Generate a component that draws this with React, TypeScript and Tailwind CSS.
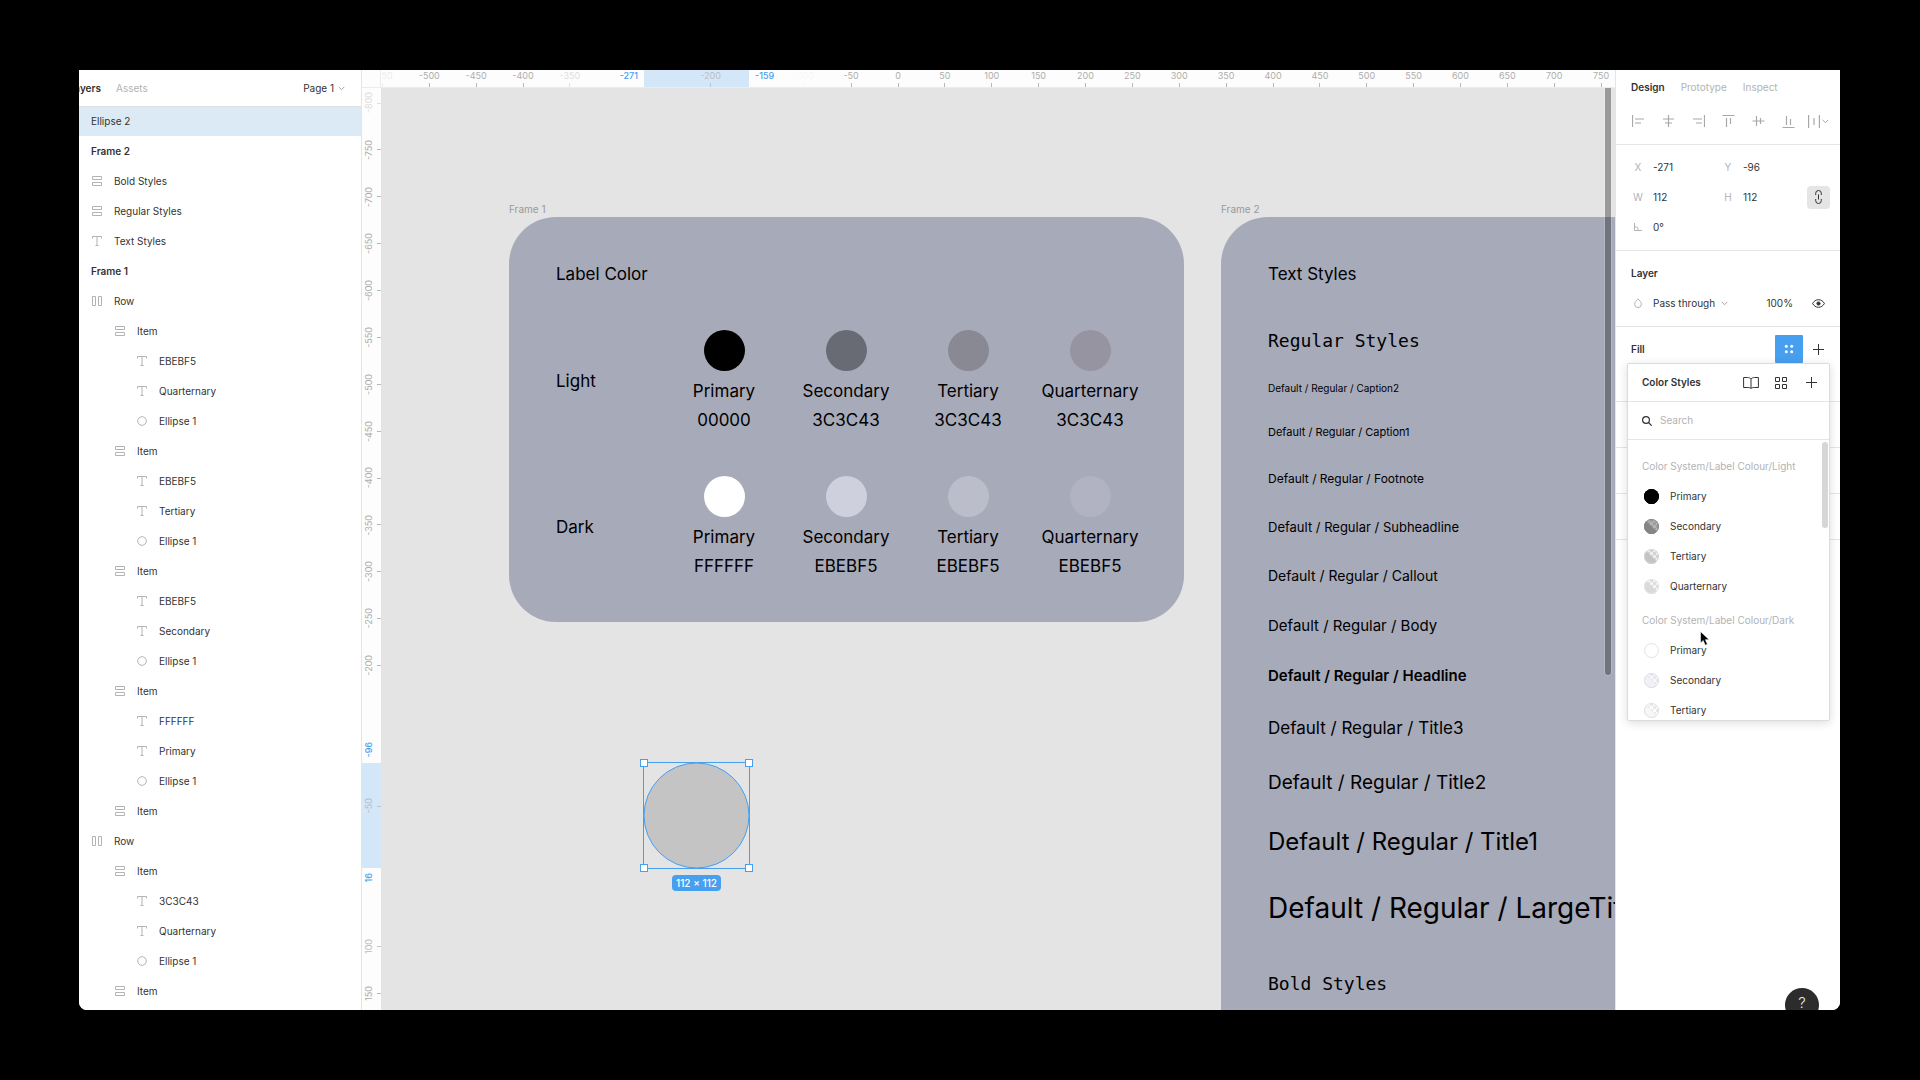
import React from 'react';

type LayerKind = 'text' | 'ellipse' | 'column' | 'row' | 'frame';

interface Layer {
  name: string;
  kind: LayerKind;
  depth: number;
  selected?: boolean;
}

const item = (labels: string[]): Layer[] => [
  { name: 'Item', kind: 'column', depth: 2 },
  ...labels.map((name): Layer => ({ name, kind: 'text', depth: 3 })),
  { name: 'Ellipse 1', kind: 'ellipse', depth: 3 },
];

const layers: Layer[] = [
  { name: 'Ellipse 2', kind: 'ellipse', depth: 0, selected: true },
  { name: 'Frame 2', kind: 'frame', depth: 0 },
  { name: 'Bold Styles', kind: 'column', depth: 1 },
  { name: 'Regular Styles', kind: 'column', depth: 1 },
  { name: 'Text Styles', kind: 'text', depth: 1 },
  { name: 'Frame 1', kind: 'frame', depth: 0 },
  { name: 'Row', kind: 'row', depth: 1 },
  ...item(['EBEBF5', 'Quarternary']),
  ...item(['EBEBF5', 'Tertiary']),
  ...item(['EBEBF5', 'Secondary']),
  ...item(['FFFFFF', 'Primary']),
  { name: 'Item', kind: 'column', depth: 2 },
  { name: 'Row', kind: 'row', depth: 1 },
  ...item(['3C3C43', 'Quarternary']),
  { name: 'Item', kind: 'column', depth: 2 },
];

const indent = ['pl-[5px]', 'pl-[28px]', 'pl-[51px]', 'pl-[73px]'];

// Canvas zoom: pixels per design unit, and where 0,0 falls in the canvas
const SCALE = 0.9375;
const ORIGIN_X = 517;
const ORIGIN_Y = 765;

interface Mark {
  at: number;
  tone?: string;
}

const faded = 'opacity-40';

const marksX: Mark[] = [
  { at: -550, tone: 'opacity-20' },
  { at: -500 },
  { at: -450 },
  { at: -400 },
  { at: -350, tone: faded },
  { at: -200, tone: 'opacity-70' },
  { at: -100, tone: 'opacity-10' },
  ...Array.from({ length: 17 }, (_, i) => ({ at: -50 + i * 50 })),
];

const marksY: Mark[] = [
  { at: -800, tone: faded },
  ...Array.from({ length: 12 }, (_, i) => ({ at: -750 + i * 50 })),
  { at: -50, tone: 'opacity-70' },
  { at: 100, tone: 'opacity-80' },
  { at: 150 },
];

const lightSwatches = [
  { name: 'Primary', hex: '00000', fill: 'bg-black' },
  { name: 'Secondary', hex: '3C3C43', fill: 'bg-[#686a74]' },
  { name: 'Tertiary', hex: '3C3C43', fill: 'bg-[#898994]' },
  { name: 'Quarternary', hex: '3C3C43', fill: 'bg-[#9794a2]' },
];

const darkSwatches = [
  { name: 'Primary', hex: 'FFFFFF', fill: 'bg-white' },
  { name: 'Secondary', hex: 'EBEBF5', fill: 'bg-[#cfd0dd]' },
  { name: 'Tertiary', hex: 'EBEBF5', fill: 'bg-[#bbbdcb]' },
  { name: 'Quarternary', hex: 'EBEBF5', fill: 'bg-[#b1b3c2]' },
];

const textStyles = [
  { name: 'Caption2', style: 'text-[10px] leading-[12px]' },
  { name: 'Caption1', style: 'text-[11px] leading-[16px]' },
  { name: 'Footnote', style: 'text-[12px] leading-[18px]' },
  { name: 'Subheadline', style: 'text-[13px] leading-[18px]' },
  { name: 'Callout', style: 'text-[14px] leading-[20px]' },
  { name: 'Body', style: 'text-[15px] leading-[20px]' },
  { name: 'Headline', style: 'text-[15px] leading-[20px] font-semibold' },
  { name: 'Title3', style: 'text-[17px] leading-[24px]' },
  { name: 'Title2', style: 'text-[19px] leading-[26px]' },
  { name: 'Title1', style: 'text-[24px] leading-[32px]' },
  { name: 'LargeTitle', style: 'text-[28px] leading-[40px]' },
];

const LayerIcon = ({ kind }: { kind: LayerKind }) => (
  <svg width="10" height="10" viewBox="0 0 10 10" fill="none" className="shrink-0" stroke={kind === 'frame' ? '#333' : '#b3b3b3'}>
    {kind === 'text' && <path d="M0.5 2.5V0.5H9.5V2.5M5 0.5V9.5M3.5 9.5H6.5" />}
    {kind === 'ellipse' && <circle cx="5" cy="5" r="4.3" />}
    {kind === 'column' && <path d="M0.5 0.5H9.5V3.5H0.5ZM0.5 6.5H9.5V9.5H0.5Z" />}
    {kind === 'row' && <path d="M0.5 0.5V9.5H3.5V0.5ZM6.5 0.5V9.5H9.5V0.5Z" />}
    {kind === 'frame' && <path d="M2.5 0V10M7.5 0V10M0 2.5H10M0 7.5H10" />}
  </svg>
);

const Chevron = ({ className = '' }: { className?: string }) => (
  <svg width="7" height="5" viewBox="0 0 7 5" fill="none" stroke="#a3a3a3" className={className}>
    <path d="M0.7 0.9L3.5 3.7L6.3 0.9" />
  </svg>
);

const PlusIcon = () => (
  <svg width="11" height="11" viewBox="0 0 11 11" stroke="#333" fill="none">
    <path d="M5.5 0V11M0 5.5H11" />
  </svg>
);

const LayersPanel = () => (
  <aside className="w-[283px] shrink-0 overflow-hidden border-r border-[#e5e5e5] bg-white">
    {/* The panel is scrolled slightly past its left edge */}
    <div className="-ml-[15px]">
      <div className="relative flex h-9 items-center pl-[3px] pr-4 shadow-[0_1px_0_#e0e0e0]">
        <button className="w-[34px] text-right font-semibold">Layers</button>
        <button className="ml-[15px] text-[#b3b3b3]">Assets</button>
        <button className="ml-auto flex items-center gap-1">
          Page 1
          <Chevron />
        </button>
      </div>
      <ul>
        {layers.map((layer, i) => (
          <li key={i}>
            <button
              className={`flex h-[30px] w-full items-center gap-3 text-left ${indent[layer.depth]} ${layer.selected ? 'bg-[#dceaf5]' : ''} ${layer.kind === 'frame' ? 'font-semibold' : ''}`}
            >
              <LayerIcon kind={layer.kind} />
              {layer.name}
            </button>
          </li>
        ))}
      </ul>
    </div>
  </aside>
);

const RulerX = () => (
  <div className="relative h-[18px] flex-1 overflow-hidden border-b border-[#ececec] bg-[#fdfdfd] text-[9px] leading-[12px] text-[#adadad]">
    <div className="absolute inset-y-0 left-[263px] w-[105px] bg-[#d3e7f8]" />
    {marksX.map(({ at, tone = '' }) => (
      <div key={at} className={`absolute inset-y-0 flex w-10 -translate-x-1/2 flex-col items-center justify-between ${tone}`} style={{ left: ORIGIN_X + at * SCALE }}>
        <span>{at}</span>
        <i className="h-1 w-px bg-[#b8b8b8]" />
      </div>
    ))}
    <span className="absolute left-[225px] top-0 w-8 text-right font-medium text-[#479ff0]">-271</span>
    <span className="absolute left-[374px] top-0 font-medium text-[#479ff0]">-159</span>
  </div>
);

const RulerY = () => (
  <div className="relative w-[19px] shrink-0 overflow-hidden bg-[#fdfdfd] text-[9px] leading-[10px] text-[#adadad]">
    <div className="absolute inset-x-0 top-[675px] h-[105px] bg-[#d3e7f8]" />
    {marksY.map(({ at, tone = '' }) => (
      <div key={at} className={`absolute inset-x-0 flex h-10 -translate-y-1/2 items-center justify-between pl-[2px] ${tone}`} style={{ top: ORIGIN_Y + at * SCALE }}>
        <span className="rotate-180 [writing-mode:vertical-rl]">{at}</span>
        <i className="h-px w-1 bg-[#b8b8b8]" />
      </div>
    ))}
    <span className="absolute left-[2px] top-[654px] rotate-180 font-medium text-[#479ff0] [writing-mode:vertical-rl]">-96</span>
    <span className="absolute left-[2px] top-[785px] rotate-180 font-medium text-[#479ff0] [writing-mode:vertical-rl]">16</span>
  </div>
);

const SwatchRow = ({ title, swatches }: { title: string; swatches: typeof lightSwatches }) => (
  <div className="flex items-center">
    <div className="w-[107px]">{title}</div>
    {swatches.map((swatch) => (
      <div key={swatch.name} className="flex w-[122px] flex-col items-center">
        <div className={`mb-[9px] size-[41px] rounded-full ${swatch.fill}`} />
        <div className="mb-[7px]">{swatch.name}</div>
        <div>{swatch.hex}</div>
      </div>
    ))}
  </div>
);

const Canvas = () => (
  <div className="relative flex-1 overflow-hidden bg-[#e4e4e4] text-black">
    {/* Frame 1 */}
    <div className="absolute left-[128px] top-[115px]">
      <div className="h-[14px] leading-[12px] text-[#999]">Frame 1</div>
      <div className="flex h-[405px] w-[675px] flex-col gap-[45px] rounded-[47px] bg-[#a7aab9] pl-[47px] pt-[46px] text-[17px] leading-[22px]">
        <div>Label Color</div>
        <SwatchRow title="Light" swatches={lightSwatches} />
        <SwatchRow title="Dark" swatches={darkSwatches} />
      </div>
    </div>

    {/* Frame 2 */}
    <div className="absolute left-[840px] top-[115px]">
      <div className="h-[14px] leading-[12px] text-[#999]">Frame 2</div>
      <div className="flex h-[1400px] w-[675px] flex-col gap-[45px] rounded-[47px] bg-[#a7aab9] pl-[47px] pt-[46px]">
        <div className="text-[17px] leading-[22px]">Text Styles</div>
        <div className="flex flex-col gap-[30px] whitespace-nowrap">
          <div className="font-['DejaVu_Sans_Mono',monospace] text-[18px] leading-[22px]">Regular Styles</div>
          {textStyles.map(({ name, style }) => (
            <div key={name} className={style}>{`Default / Regular / ${name}`}</div>
          ))}
        </div>
        <div className="font-['DejaVu_Sans_Mono',monospace] text-[18px] leading-[22px]">Bold Styles</div>
      </div>
    </div>

    {/* Selected ellipse */}
    <div className="absolute left-[263px] top-[675px] flex flex-col items-center">
      <svg width="105" height="105" viewBox="0 0 105 105" className="overflow-visible" stroke="#479ff0">
        <circle cx="52.5" cy="52.5" r="52.5" fill="#c4c4c4" />
        <rect x="-0.5" y="-0.5" width="106" height="106" fill="none" />
        <g fill="#fff">
          <rect x="-3.5" y="-3.5" width="7" height="7" />
          <rect x="101.5" y="-3.5" width="7" height="7" />
          <rect x="-3.5" y="101.5" width="7" height="7" />
          <rect x="101.5" y="101.5" width="7" height="7" />
        </g>
      </svg>
      <div className="mt-[7px] h-4 rounded-sm bg-[#479ff0] px-1 font-medium leading-4 text-white">112 × 112</div>
    </div>

    {/* Scrollbar */}
    <div className="absolute right-1 top-0 h-[587px] w-[6px] rounded-b-full bg-black/32 ring-1 ring-white/15" />
  </div>
);

const alignIcons = [
  { label: 'Align left', d: 'M0.5 0V12M3 4H12M3 8H9', w: 13 },
  { label: 'Align horizontal centers', d: 'M6.5 0V12M1 4H12M3 8H10', w: 13 },
  { label: 'Align right', d: 'M12.5 0V12M1 4H10M4 8H10', w: 13 },
  { label: 'Align top', d: 'M0.5 0.5H12.5M4.5 3V12M8.5 3V9', w: 13 },
  { label: 'Align vertical centers', d: 'M0.5 6H12.5M4.5 1V11M8.5 3V9', w: 13 },
  { label: 'Align bottom', d: 'M0.5 12.5H12.5M4.5 1V10M8.5 4V10', w: 13 },
];

const Field = ({ label, value, children }: { label: string; value: string; children?: React.ReactNode }) => (
  <label className="flex items-center">
    <span className="flex w-[30px] justify-center text-[#b3b3b3]">{children ?? label}</span>
    <input aria-label={label} defaultValue={value} className="w-[60px] bg-transparent outline-none" />
  </label>
);

const Section = ({ className = '', children }: { className?: string; children?: React.ReactNode }) => (
  <section className={`border-b border-[#e5e5e5] px-[7px] pb-2 pt-[7px] ${className}`}>{children}</section>
);

const DesignPanel = () => (
  <aside className="relative w-[225px] shrink-0 border-l border-[#e5e5e5] bg-white">
    <div className="flex h-9 items-center gap-4 pb-px pl-[15px]">
      <button className="font-semibold">Design</button>
      <button className="text-[#b3b3b3]">Prototype</button>
      <button className="text-[#b3b3b3]">Inspect</button>
    </div>
    <div className="flex h-[39px] border-b border-[#e5e5e5] px-[7px] pb-2">
      {alignIcons.map(({ label, d, w }) => (
        <button key={label} aria-label={label} className="flex w-[30px] items-center justify-center">
          <svg width={w} height="13" viewBox="0 0 13 13" stroke="#a8a8a8" strokeWidth="1.2" fill="none">
            <path d={d} />
          </svg>
        </button>
      ))}
      <button aria-label="Distribute" className="flex w-[30px] items-center justify-center gap-[2px]">
        <svg width="12" height="13" viewBox="0 0 12 13" stroke="#a8a8a8" strokeWidth="1.2" fill="none">
          <path d="M0.6 0V13M11.4 0V13M6 3V10" />
        </svg>
        <Chevron />
      </button>
    </div>

    <Section>
      <div className="flex h-[30px]">
        <Field label="X" value="-271" />
        <Field label="Y" value="-96" />
      </div>
      <div className="flex h-[30px] items-center">
        <Field label="W" value="112" />
        <Field label="H" value="112" />
        <button aria-label="Constrain proportions" className="ml-1 flex size-[23px] items-center justify-center rounded-sm bg-[#e5e5e5]">
          <svg width="7" height="14" viewBox="0 0 7 14" stroke="#333" fill="none">
            <path d="M0.7 5V3.3a2.8 2.8 0 0 1 5.6 0V5M0.7 9v1.7a2.8 2.8 0 0 0 5.6 0V9M3.5 4.5v5" />
          </svg>
        </button>
      </div>
      <div className="flex h-[30px]">
        <Field label="Rotation" value="0°">
          <svg width="8" height="8" viewBox="0 0 8 8" stroke="#b3b3b3" fill="none">
            <path d="M0.5 0V7.5H8M0.5 3.5A4 4 0 0 1 4.5 7.5" />
          </svg>
        </Field>
      </div>
    </Section>

    <Section>
      <h2 className="px-2 font-semibold leading-[30px]">Layer</h2>
      <div className="flex h-[30px] items-center">
        <span className="flex w-[30px] justify-center">
          <svg width="8" height="10" viewBox="0 0 8 10" stroke="#b3b3b3" fill="none">
            <path d="M4 0.8C5.6 2.8 7.4 4.2 7.4 6.2A3.4 3.3 0 0 1 0.6 6.2C0.6 4.2 2.4 2.8 4 0.8Z" />
          </svg>
        </span>
        <div className="flex w-[90px] items-center">
          <select aria-label="Blend mode" className="w-[68px] appearance-none bg-transparent outline-none">
            <option>Pass through</option>
          </select>
          <Chevron />
        </div>
        <input aria-label="Opacity" defaultValue="100%" className="w-[60px] bg-transparent pr-[10px] text-right outline-none" />
        <button aria-label="Toggle visibility" className="flex w-[30px] justify-center">
          <svg width="13" height="9" viewBox="0 0 13 9" stroke="#333" fill="none">
            <path d="M0.6 4.5C2 2 4 0.7 6.5 0.7S11 2 12.4 4.5C11 7 9 8.3 6.5 8.3S2 7 0.6 4.5Z" />
            <circle cx="6.5" cy="4.5" r="1.6" fill="#333" />
          </svg>
        </button>
      </div>
    </Section>

    <Section className="h-[75px]">
      <div className="flex h-[30px] items-center pl-2">
        <h2 className="mr-auto font-semibold">Fill</h2>
        <button aria-label="Styles" className="flex size-7 items-center justify-center rounded-[1px] bg-[#479ff0]">
          <svg width="10" height="10" viewBox="0 0 10 10" fill="#fff">
            <circle cx="2.3" cy="2.3" r="1.5" />
            <circle cx="7.7" cy="2.3" r="1.5" />
            <circle cx="2.3" cy="7.7" r="1.5" />
            <circle cx="7.7" cy="7.7" r="1.5" />
          </svg>
        </button>
        <button aria-label="Add fill" className="flex w-[30px] justify-center">
          <PlusIcon />
        </button>
      </div>
    </Section>
    <Section className="h-[46px]" />
    <Section className="h-[46px]" />
    <Section className="h-[46px]" />

    <ColorStyles />

    <button className="absolute -bottom-3 right-[21px] flex size-[34px] items-center justify-center rounded-full bg-[#2c2c2c] pb-1 text-[15px] font-light text-white/90">?</button>
  </aside>
);

const paints = {
  black: { solid: '#000', base: '#000', check: '#000', ring: '#000' },
  gray: { solid: '#858587', base: '#b4b4b6', check: '#9d9d9f', ring: '#858587' },
  silver: { solid: '#c3c3c5', base: '#ededee', check: '#d3d3d4', ring: '#d6d6d8' },
  mist: { solid: '#dadadb', base: '#f5f5f5', check: '#dddddd', ring: '#e4e4e4' },
  white: { solid: '#fff', base: '#fff', check: '#fff', ring: '#e2e2e2' },
  lilac: { solid: '#f1f1f8', base: '#f8f8fb', check: '#e7e7ee', ring: '#dddde2' },
  pale: { solid: '#f7f7fa', base: '#fdfdfd', check: '#e8e8eb', ring: '#dedede' },
};

type Paint = keyof typeof paints;

const PaintDot = ({ paint }: { paint: Paint }) => {
  const { solid, base, check, ring } = paints[paint];
  return (
    <svg width="15" height="15" viewBox="0 0 15 15" className="shrink-0">
      <clipPath id={`dot-${paint}`}>
        <circle cx="7.5" cy="7.5" r="7.5" />
      </clipPath>
      <g clipPath={`url(#dot-${paint})`}>
        <rect width="15" height="15" fill={base} />
        <path d="M6 0h3v3H6zM12 0h3v3h-3zM3 3h3v3H3zM9 3h3v3H9zM6 6h3v3H6zM12 6h3v3h-3zM9 9h3v3H9z" fill={check} />
        <path d="M0 0L15 15H0Z" fill={solid} />
      </g>
      <circle cx="7.5" cy="7.5" r="7" fill="none" stroke={ring} />
    </svg>
  );
};

const StyleGroup = ({ title, styles }: { title: string; styles: { name: string; paint: Paint }[] }) => (
  <div className="mb-1">
    <h3 className="pl-[14px] leading-[30px] text-[#b3b3b3]">{title}</h3>
    {styles.map(({ name, paint }) => (
      <button key={name} className="flex h-[30px] w-full items-center gap-[11px] pl-4">
        <PaintDot paint={paint} />
        {name}
      </button>
    ))}
  </div>
);

const ColorStyles = () => (
  <div className="absolute left-[11px] top-[293px] h-[358px] w-[203px] overflow-hidden rounded-[2px] border border-[#dcdcdc] bg-white shadow-[0_2px_10px_rgba(0,0,0,0.14)]">
    <div className="flex h-[38px] items-center border-b border-[#e5e5e5] pl-[14px] pr-[3px]">
      <h2 className="mr-auto font-semibold">Color Styles</h2>
      <button aria-label="Libraries" className="flex w-[30px] justify-center">
        <svg width="16" height="12" viewBox="0 0 16 12" stroke="#333" fill="none">
          <path d="M8 2C7 0.9 6 0.5 4.4 0.5H0.6V10.5H4.8C6.4 10.5 7.2 10.8 8 11.6C8.8 10.8 9.6 10.5 11.2 10.5H15.4V0.5H11.6C10 0.5 9 0.9 8 2ZM8 2V11.4" />
        </svg>
      </button>
      <button aria-label="Show as grid" className="flex w-[30px] justify-center">
        <svg width="12" height="12" viewBox="0 0 12 12" stroke="#333" fill="none">
          <path d="M0.5 0.5H4.5V4.5H0.5ZM7.5 0.5H11.5V4.5H7.5ZM0.5 7.5H4.5V11.5H0.5ZM7.5 7.5H11.5V11.5H7.5Z" />
        </svg>
      </button>
      <button aria-label="Create style" className="flex w-[30px] justify-center">
        <PlusIcon />
      </button>
    </div>
    <label className="flex h-[38px] items-center gap-2 border-b border-[#e5e5e5] pl-[14px]">
      <svg width="10" height="10" viewBox="0 0 10 10" stroke="#333" fill="none" strokeWidth="1.2">
        <circle cx="4" cy="4" r="3.4" />
        <path d="M6.5 6.5L9.7 9.7" />
      </svg>
      <input aria-label="Search styles" placeholder="Search" className="w-36 bg-transparent outline-none placeholder:text-[#b3b3b3]" />
    </label>
    <div className="pt-[11px]">
      <StyleGroup
        title="Color System/Label Colour/Light"
        styles={[
          { name: 'Primary', paint: 'black' },
          { name: 'Secondary', paint: 'gray' },
          { name: 'Tertiary', paint: 'silver' },
          { name: 'Quarternary', paint: 'mist' },
        ]}
      />
      <StyleGroup
        title="Color System/Label Colour/Dark"
        styles={[
          { name: 'Primary', paint: 'white' },
          { name: 'Secondary', paint: 'lilac' },
          { name: 'Tertiary', paint: 'pale' },
        ]}
      />
    </div>
    <div className="absolute right-[1px] top-[78px] h-[86px] w-[6px] rounded-full bg-[#d6d6d6]" />

    {/* Pointer */}
    <svg width="10" height="15" viewBox="0 0 10 15" className="absolute left-[72px] top-[267px]">
      <path d="M0.5 0.5V12L3.2 9.5L5.2 14.2L7.4 13.2L5.4 8.7H9.2Z" fill="#000" stroke="#fff" strokeWidth="0.6" />
    </svg>
  </div>
);

const App = () => (
  <div className="h-screen bg-black pb-[70px] pl-[79px] pr-20 pt-[70px] font-['Inter',sans-serif] text-[10px] text-[#333]">
    <div className="flex h-full overflow-hidden rounded-b-lg bg-white">
      <LayersPanel />
      <main className="flex min-w-0 flex-1 flex-col">
        <div className="flex">
          <div className="w-[19px] shrink-0 border-b border-r border-[#ececec] bg-[#fdfdfd]" />
          <RulerX />
        </div>
        <div className="flex min-h-0 flex-1">
          <RulerY />
          <Canvas />
        </div>
      </main>
      <DesignPanel />
    </div>
  </div>
);

export default App;
